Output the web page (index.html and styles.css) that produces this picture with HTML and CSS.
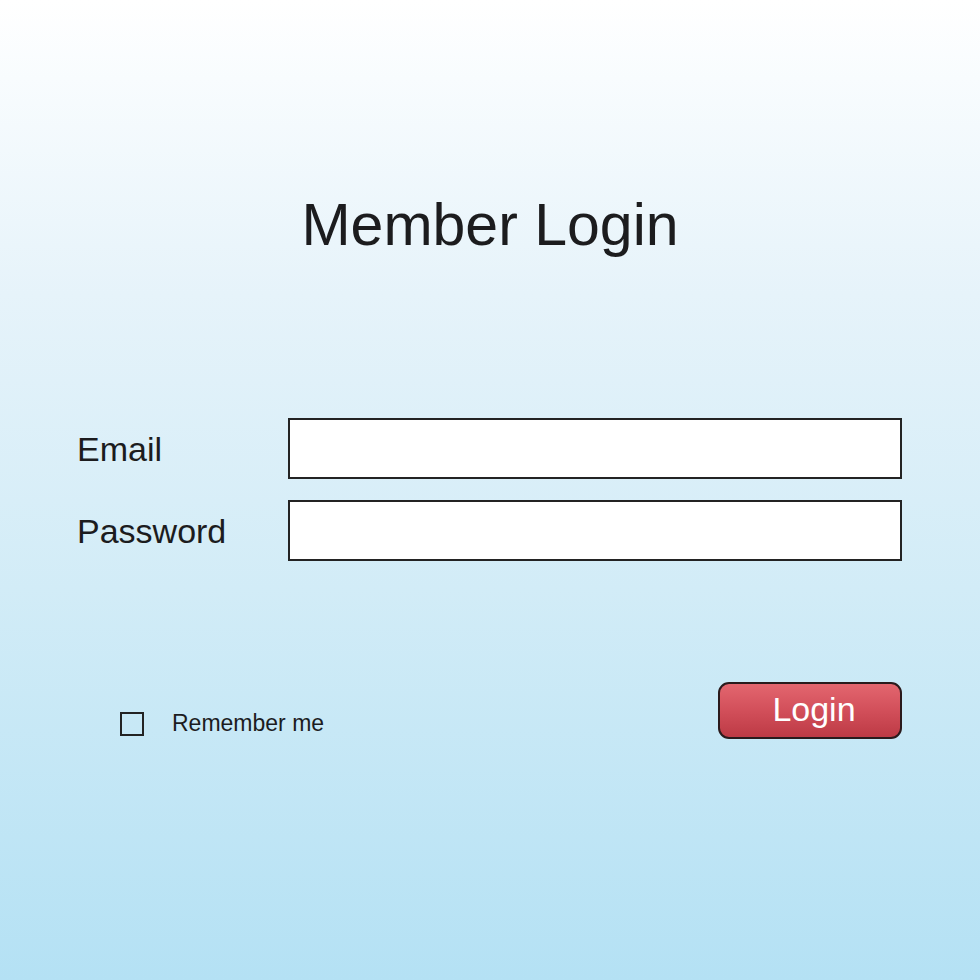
FILE: index.html
```html
<!DOCTYPE html>
<html lang="en">
<head>
    <meta charset="UTF-8">
    <meta name="viewport" content="width=device-width, initial-scale=1.0">
    <title>Member Login</title>
    <link rel="stylesheet" href="styles.css">
</head>
<body>
    <div class="page">
        <h1>Member Login</h1>
        <form class="login-form">
            <div class="fields">
                <label for="email">Email</label>
                <input type="text" id="email">
                <label for="password">Password</label>
                <input type="password" id="password">
            </div>
            <div class="actions">
                <label class="remember">
                    <span class="box"></span>
                    Remember me
                </label>
                <button type="submit">Login</button>
            </div>
        </form>
    </div>
</body>
</html>
```

FILE: styles.css
```css
html, body {
    height: 100%;
}
body {
    margin: 0;
    font-family: 'Liberation Sans', Arial, sans-serif;
    color: #1c1c1e;
    background: linear-gradient(to bottom, #ffffff 0%, #f8fcfe 8%, #e6f3fa 30%, #d2ecf7 60%, #b4e1f4 100%);
}
.page {
    width: 825px;
    margin: 0 auto 0 77px;
}
h1 {
    margin: 196px 0 0;
    font-size: 59px;
    line-height: 59px;
    font-weight: normal;
    text-align: center;
    padding-left: 1px;
}
.login-form {
    margin-top: 163px;
}
.fields {
    display: grid;
    grid-template-columns: 211px 614px;
    row-gap: 21px;
    align-items: center;
}
.fields label {
    font-size: 34px;
    line-height: 40px;
}
.fields input {
    box-sizing: border-box;
    height: 61px;
    margin: 0;
    border: 2px solid #232323;
    background-color: #ffffff;
    font-size: 20px;
}
.actions {
    display: flex;
    justify-content: space-between;
    align-items: flex-end;
    margin-top: 121px;
}
.remember {
    display: flex;
    align-items: center;
    gap: 28px;
    margin: 0 0 2px 43px;
    font-size: 23px;
}
.remember .box {
    box-sizing: border-box;
    width: 24px;
    height: 24px;
    border: 2px solid #232323;
}
button {
    box-sizing: border-box;
    width: 184px;
    height: 57px;
    border: 2px solid #2a1a1c;
    border-radius: 11px;
    background: linear-gradient(to bottom, #e3666f 0%, #d24f5a 50%, #bd3a45 100%);
    color: #ffffff;
    font-family: 'Liberation Sans', Arial, sans-serif;
    font-size: 34px;
    padding: 0 0 3px 8px;
    cursor: pointer;
}
```
